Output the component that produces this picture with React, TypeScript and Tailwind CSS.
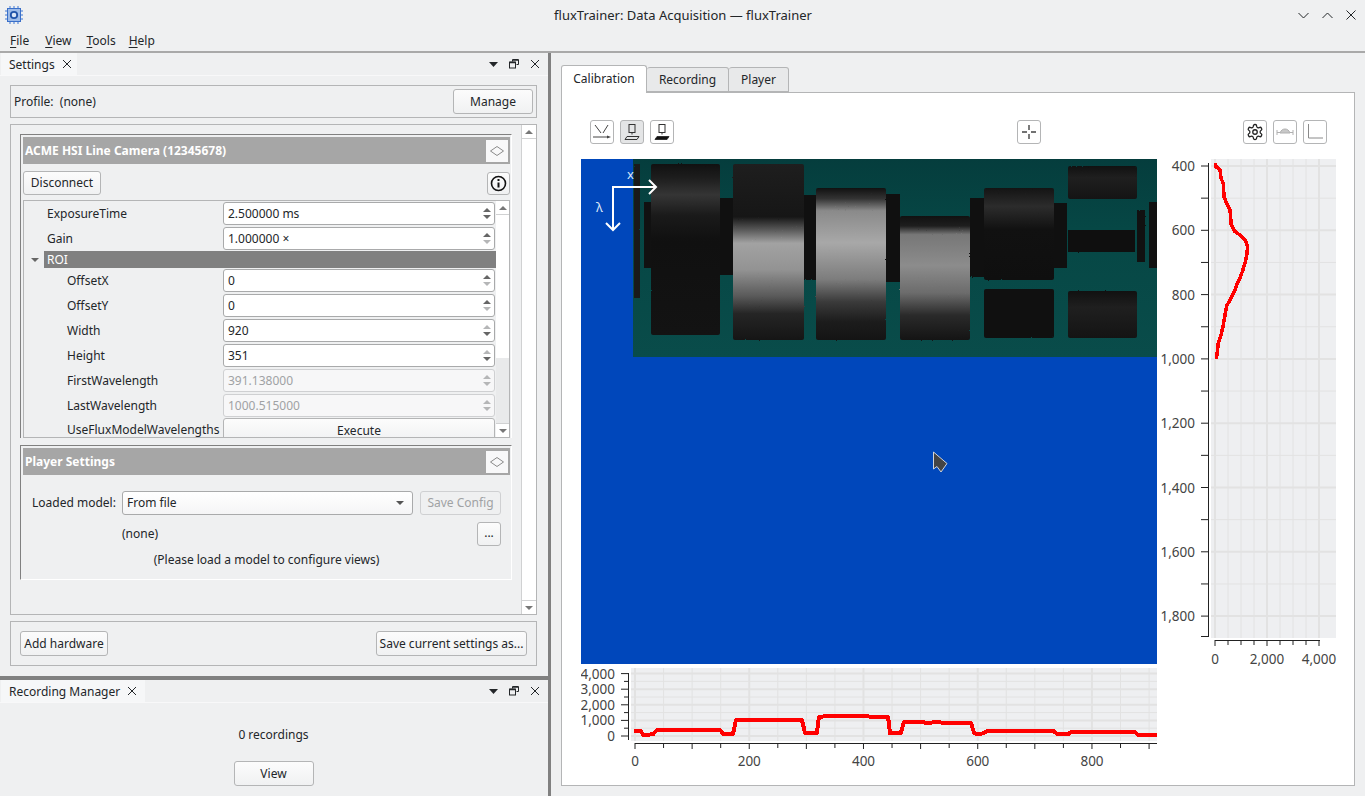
import { ReactNode } from "react";

const Tri = ({ dir = "up", color = "#666" }: { dir?: "up" | "down"; color?: string }) => (
  <svg width="8" height="4" viewBox="0 0 8 4" className="block">
    <polygon points={dir === "up" ? "4,0 8,4 0,4" : "0,0 8,0 4,4"} fill={color} />
  </svg>
);

const Btn = ({ children, className = "", disabled }: { children: ReactNode; className?: string; disabled?: boolean }) => (
  <div
    className={
      "flex items-center justify-center border rounded-[3px] whitespace-nowrap " +
      (disabled
        ? "border-[#cfd0d2] text-[#a0a2a4] bg-[#eff0f1] "
        : "border-[#b4b5b6] bg-gradient-to-b from-[#fcfcfc] to-[#f0f1f2] ") +
      className
    }
  >
    {children}
  </div>
);

const DockHeader = ({ title, tabW }: { title: string; tabW: string }) => (
  <div className="h-[23px] flex items-center border-b border-[#f8f8f9] shrink-0 pl-px">
    <div className={"h-[22px] bg-[#f6f7f8] flex items-center pl-2 gap-[7px] " + tabW}>
      <span className="pt-[2px]">{title}</span>
      <svg width="10" height="10" viewBox="0 0 10 10"><path d="M1 1l8 8M9 1l-8 8" stroke="#232629" strokeWidth="1" /></svg>
    </div>
    <div className="ml-auto flex items-center pr-[8px] gap-[11px]">
      <svg width="9" height="5" viewBox="0 0 9 5"><polygon points="0,0 9,0 4.5,5" fill="#232629" /></svg>
      <svg width="10" height="10" viewBox="0 0 10 10" fill="none" stroke="#232629">
        <path d="M3.5 2.5V.5h6v5h-2" />
        <rect x=".5" y="3" width="6" height="6" strokeWidth="1" />
        <path d="M1 3.5h5" strokeWidth="1.5" />
        <path d="M4 1h5" strokeWidth="1.5" />
      </svg>
      <svg width="10" height="10" viewBox="0 0 10 10"><path d="M1 1l8 8M9 1l-8 8" stroke="#232629" strokeWidth="1" /></svg>
    </div>
  </div>
);

const GroupHeader = ({ title }: { title: string }) => (
  <div className="h-[27px] bg-[#a6a6a6] flex items-center justify-between pl-[2px] pr-[2px]">
    <span className="font-bold text-white pt-px">{title}</span>
    <div className="w-[22px] h-[22px] bg-[#f8f8f9] flex items-center justify-center">
      <svg width="14" height="10" viewBox="0 0 14 10"><path d="M7 .5L13.5 5 7 9.5.5 5z" fill="none" stroke="#8a8a8a" /></svg>
    </div>
  </div>
);

const SpinRow = ({
  label,
  value,
  indent,
  up = "#666",
  down = "#666",
  disabled,
}: {
  label: string;
  value: string;
  indent: string;
  up?: string;
  down?: string;
  disabled?: boolean;
}) => (
  <div className="h-[25px] flex items-center shrink-0">
    <div className={"w-[199px] " + indent}>{label}</div>
    <div
      className={
        "w-[272px] h-[23px] border rounded-[3px] flex items-center " +
        (disabled ? "border-[#cfd0d2] bg-[#f7f7f8] text-[#a0a2a4]" : "border-[#a9aaab] bg-white")
      }
    >
      <span className="flex-1 pl-[4px]">{value}</span>
      <div className="w-[14px] flex flex-col items-center gap-[3px]">
        <Tri color={up} />
        <Tri dir="down" color={down} />
      </div>
    </div>
  </div>
);

const ScrollBtn = ({ dir }: { dir: "up" | "down" }) => (
  <div className={"h-[14px] flex items-center justify-center bg-white " + (dir === "up" ? "border-b" : "border-t") + " border-[#d0d1d2]"}>
    <Tri dir={dir} color="#777" />
  </div>
);

const ToolBtn = ({ children, pressed }: { children: ReactNode; pressed?: boolean }) => (
  <div className={"w-[24px] h-[24px] border border-[#b4b5b6] rounded-[3px] flex items-center justify-center " + (pressed ? "bg-[#e4e5e6]" : "bg-white")}>
    {children}
  </div>
);

const Camera = ({ plate }: { plate: "outline" | "solid" }) => (
  <svg width="18" height="18" viewBox="0 0 18 18" fill="none" stroke="#333">
    <rect x="6" y="1.5" width="6" height="8" />
    <path d="M9 9.5v2" />
    <polygon points="4,13.5 16,13.5 14,16.5 2,16.5" fill={plate === "solid" ? "#111" : "none"} />
  </svg>
);

// cylinders of the sample, positions read off the screenshot
const Cylinder = ({ x, y, w, h, fill }: { x: number; y: number; w: number; h: number; fill: string }) => (
  <rect x={x} y={y} width={w} height={h} rx="2" fill={fill} />
);

const CameraImage = () => (
  <svg width="576" height="505" viewBox="0 0 576 505" className="block shrink-0">
    <defs>
      <linearGradient id="teal" x1="0" y1="0" x2="0" y2="1">
        <stop offset="0" stopColor="#053d3d" />
        <stop offset="0.35" stopColor="#064745" />
        <stop offset="1" stopColor="#094c4a" />
      </linearGradient>
      <linearGradient id="dark1" x1="0" y1="0" x2="0" y2="1">
        <stop offset="0" stopColor="#111" />
        <stop offset="0.08" stopColor="#1d1d1d" />
        <stop offset="0.18" stopColor="#353535" />
        <stop offset="0.3" stopColor="#1a1a1a" />
        <stop offset="0.45" stopColor="#101010" />
        <stop offset="1" stopColor="#131313" />
      </linearGradient>
      <linearGradient id="bright2" x1="0" y1="0" x2="0" y2="1">
        <stop offset="0" stopColor="#1e1e1e" />
        <stop offset="0.3" stopColor="#161616" />
        <stop offset="0.37" stopColor="#555" />
        <stop offset="0.45" stopColor="#a2a2a2" />
        <stop offset="0.6" stopColor="#939393" />
        <stop offset="0.75" stopColor="#5a5a5a" />
        <stop offset="0.85" stopColor="#252525" />
        <stop offset="1" stopColor="#151515" />
      </linearGradient>
      <linearGradient id="bright3" x1="0" y1="0" x2="0" y2="1">
        <stop offset="0" stopColor="#111" />
        <stop offset="0.07" stopColor="#333" />
        <stop offset="0.15" stopColor="#8a8a8a" />
        <stop offset="0.36" stopColor="#a8a8a8" />
        <stop offset="0.6" stopColor="#7d7d7d" />
        <stop offset="0.75" stopColor="#3a3a3a" />
        <stop offset="0.88" stopColor="#1c1c1c" />
        <stop offset="1" stopColor="#141414" />
      </linearGradient>
      <linearGradient id="bright4" x1="0" y1="0" x2="0" y2="1">
        <stop offset="0" stopColor="#111" />
        <stop offset="0.08" stopColor="#1e1e1e" />
        <stop offset="0.15" stopColor="#777" />
        <stop offset="0.4" stopColor="#8c8c8c" />
        <stop offset="0.62" stopColor="#6c6c6c" />
        <stop offset="0.8" stopColor="#2a2a2a" />
        <stop offset="1" stopColor="#141414" />
      </linearGradient>
      <linearGradient id="dark5" x1="0" y1="0" x2="0" y2="1">
        <stop offset="0" stopColor="#141414" />
        <stop offset="0.2" stopColor="#2c2c2c" />
        <stop offset="0.45" stopColor="#111" />
        <stop offset="1" stopColor="#0f0f0f" />
      </linearGradient>
      <linearGradient id="dark6" x1="0" y1="0" x2="0" y2="1">
        <stop offset="0" stopColor="#111" />
        <stop offset="0.35" stopColor="#1f1f1f" />
        <stop offset="1" stopColor="#141414" />
      </linearGradient>
      <filter id="jag" x="-5%" y="-5%" width="110%" height="110%" colorInterpolationFilters="sRGB">
        <feTurbulence type="fractalNoise" baseFrequency="0.7" numOctaves="1" seed="4" result="noise" />
        <feDisplacementMap in="SourceGraphic" in2="noise" scale="2" xChannelSelector="R" yChannelSelector="G" />
      </filter>
    </defs>
    <rect width="576" height="505" fill="#0047bb" />
    <rect x="52" width="524" height="198" fill="url(#teal)" />
    <g filter="url(#jag)">
      <rect x="53" y="5" width="6" height="134" fill="#1a1a1a" />
      <rect x="63" y="43" width="8" height="66" fill="#111" />
      <Cylinder x={70} y={5} w={69} h={171} fill="url(#dark1)" />
      <rect x="139" y="39" width="14" height="77" fill="#101010" />
      <Cylinder x={152} y={5} w={71} h={176} fill="url(#bright2)" />
      <rect x="223" y="36" width="13" height="85" fill="#101010" />
      <Cylinder x={235} y={29} w={70} h={152} fill="url(#bright3)" />
      <rect x="305" y="35" width="14" height="88" fill="#101010" />
      <Cylinder x={319} y={57} w={70} h={124} fill="url(#bright4)" />
      <rect x="389" y="39" width="14" height="79" fill="#101010" />
      <Cylinder x={403} y={29} w={70} h={92} fill="url(#dark5)" />
      <Cylinder x={403} y={130} w={70} h={49} fill="#101010" />
      <rect x="473" y="44" width="13" height="65" fill="#101010" />
      <Cylinder x={487} y={7} w={69} h={33} fill="url(#dark6)" />
      <rect x="487" y="71" width="67" height="22" fill="#0f0f0f" />
      <Cylinder x={487} y={132} w={69} h={47} fill="url(#dark6)" />
      <rect x="556" y="51" width="8" height="52" fill="#111" />
      <rect x="568" y="43" width="8" height="66" fill="#111" />
    </g>
    <path d="M32 71V28h43M68 21l7 7-7 7M25 64l7 7 7-7" fill="none" stroke="#fff" strokeWidth="2" />
    <text x="46" y="20" fill="#dbe6f7" fontSize="13">x</text>
    <text x="15" y="53" fill="#dbe6f7" fontSize="13">λ</text>
    <polygon points="352.5,293 352.5,310 356,307.5 360,313 366,304.5" fill="#444" stroke="#d0d4dc" strokeWidth="1" />
  </svg>
);

const bottomCurve: [number, number][] = [
  [187, 228], [205, 228], [210, 240], [235, 238], [245, 225], [405, 225], [413, 236], [438, 236], [445, 195],
  [612, 195], [620, 235], [650, 235], [655, 186], [670, 184], [780, 184], [785, 186], [830, 186], [835, 235],
  [862, 235], [870, 202], [920, 202], [930, 205], [945, 202], [1040, 205], [1048, 235], [1060, 238], [1070, 235],
  [1080, 229], [1250, 229], [1258, 238], [1285, 238], [1292, 232], [1455, 232], [1462, 239], [1510, 239],
];

// svg origin is at (581, 664) of the page
const BottomPlot = () => {
  const line = bottomCurve.map(([x, y]) => `${(560 + x / 2.53 - 581).toFixed(1)},${(y / 3 - 9).toFixed(1)}`).join(" ");
  const xMinor = Array.from({ length: 19 }, (_, i) => 54 + i * 28.56);
  const yMinor = Array.from({ length: 9 }, (_, i) => 72 - i * 7.8);
  return (
    <svg width="576" height="111" viewBox="0 0 576 111" className="block">
      <rect x="50" y="4" width="526" height="73" fill="#eeeff1" />
      {xMinor.map((x, i) => (
        <line key={i} x1={x} x2={x} y1="4" y2="77" stroke="#e2e2e2" strokeWidth={i % 4 === 0 ? 2 : 1} />
      ))}
      {yMinor.map((y, i) => (
        <line key={i} x1="50" x2="576" y1={y} y2={y} stroke="#e2e2e2" strokeWidth={i % 2 === 0 ? 2 : 1} />
      ))}
      {yMinor.map((y, i) => (
        <line key={i} x1={i % 2 === 0 ? 40 : 43} x2="47" y1={y} y2={y} stroke="#222" />
      ))}
      <line x1="47.5" x2="47.5" y1="9" y2="76" stroke="#222" />
      <line x1="54" x2="576" y1="79.5" y2="79.5" stroke="#222" />
      {xMinor.map((x, i) => (
        <line key={i} x1={x} x2={x} y1="79" y2={i % 2 === 0 ? 85 : 84} stroke="#222" />
      ))}
      <g fill="#444" fontSize="13.5" fontFamily="Noto Sans, sans-serif">
        {["4,000", "3,000", "2,000", "1,000", "0"].map((t, i) => (
          <text key={t} x="34" y={14.5 + i * 15.6} textAnchor="end">{t}</text>
        ))}
        {["0", "200", "400", "600", "800"].map((t, i) => (
          <text key={t} x={54 + i * 114.25} y="102" textAnchor="middle">{t}</text>
        ))}
      </g>
      <polyline points={line} fill="none" stroke="#ff0000" strokeWidth="4" strokeLinejoin="round" shapeRendering="crispEdges" />
    </svg>
  );
};

const sideCurve: [number, number][] = [
  [181, 25], [183, 35], [195, 45], [198, 70], [205, 85], [207, 125], [215, 145], [225, 165], [229, 210], [238, 228],
  [255, 240], [272, 258], [278, 275], [275, 300], [270, 325], [262, 350], [255, 370], [245, 390], [238, 410],
  [228, 430], [215, 452], [210, 480], [205, 510], [198, 540], [190, 565], [187, 590], [184, 612],
];

// svg origin is at (1157, 159) of the page
const SidePlot = () => {
  const line = sideCurve.map(([x, y]) => `${(x / 3 - 2).toFixed(1)},${(y / 3 - 4).toFixed(1)}`).join(" ");
  const yTicks = Array.from({ length: 15 }, (_, i) => 7 + i * 32.15);
  const xTicks = Array.from({ length: 9 }, (_, i) => 58 + i * 13);
  return (
    <svg width="188" height="520" viewBox="0 0 188 520" className="block">
      <rect x="54" y="0" width="125" height="479" fill="#eeeff1" />
      {xTicks.map((x, i) => (
        <line key={i} x1={x} x2={x} y1="0" y2="479" stroke="#e2e2e2" strokeWidth={i % 4 === 0 ? 2 : 1} />
      ))}
      {yTicks.map((y, i) => (
        <line key={i} x1="54" x2="179" y1={y} y2={y} stroke="#e2e2e2" strokeWidth={i % 2 === 0 ? 2 : 1} />
      ))}
      <line x1="51.5" x2="51.5" y1="4" y2="478" stroke="#222" />
      {yTicks.map((y, i) => (
        <line key={i} x1="44" x2="51" y1={y} y2={y} stroke="#222" />
      ))}
      <line x1="44" x2="51" y1="477.5" y2="477.5" stroke="#222" />
      <line x1="58" x2="163" y1="481.5" y2="481.5" stroke="#222" />
      {xTicks.map((x, i) => (
        <line key={i} x1={x} x2={x} y1="481" y2={i % 4 === 0 ? 487 : 486} stroke="#222" />
      ))}
      <g fill="#444" fontSize="13.5" fontFamily="Noto Sans, sans-serif">
        {["400", "600", "800", "1,000", "1,200", "1,400", "1,600", "1,800"].map((t, i) => (
          <text key={t} x="38" y={12 + i * 64.3} textAnchor="end">{t}</text>
        ))}
        <text x="58" y="505" textAnchor="middle">0</text>
        <text x="110" y="505" textAnchor="middle">2,000</text>
        <text x="162" y="505" textAnchor="middle">4,000</text>
      </g>
      <polyline points={line} fill="none" stroke="#ff0000" strokeWidth="3.5" strokeLinejoin="round" shapeRendering="crispEdges" />
    </svg>
  );
};

export default function App() {
  return (
    <div className="w-[1365px] h-[796px] overflow-hidden bg-[#eff0f1] flex flex-col font-['Noto_Sans',sans-serif] text-[12px] leading-none text-[#232629]">
      {/* title bar */}
      <div className="h-[30px] shrink-0 flex items-center pl-[4px] pr-[9px]">
        <svg width="20" height="20" viewBox="0 0 20 20" fill="none">
          <path d="M6 1v18M10 1v18M14 1v18M1 6h18M1 10h18M1 14h18" stroke="#3f78d4" />
          <rect x="3.5" y="3.5" width="13" height="13" fill="#9dbbe8" stroke="#3a6fc9" />
          <circle cx="10" cy="10" r="3.2" fill="#dbe6f7" stroke="#1f52a8" strokeWidth="1.8" />
        </svg>
        <div className="flex-1 text-center text-[13px] pl-[44px]">fluxTrainer: Data Acquisition — fluxTrainer</div>
        <div className="flex items-center gap-[13px] text-[#232629]">
          <svg width="11" height="7" viewBox="0 0 11 7"><path d="M.5 1l5 5 5-5" fill="none" stroke="#232629" /></svg>
          <svg width="11" height="7" viewBox="0 0 11 7"><path d="M.5 6l5-5 5 5" fill="none" stroke="#232629" /></svg>
          <svg width="10" height="10" viewBox="0 0 10 10"><path d="M.5.5l9 9M9.5.5l-9 9" stroke="#232629" /></svg>
        </div>
      </div>
      {/* menu */}
      <div className="h-[23px] shrink-0 flex items-center pl-[10px] gap-[15px] border-b-2 border-[#a9a9a9]">
        <span className="mr-px"><u className="underline-offset-2">F</u>ile</span>
        <span><u className="underline-offset-2">V</u>iew</span>
        <span><u className="underline-offset-2">T</u>ools</span>
        <span className="-ml-[2px]"><u className="underline-offset-2">H</u>elp</span>
      </div>

      <div className="flex-1 min-h-0 flex">
        {/* left docks */}
        <div className="w-[548px] shrink-0 flex flex-col">
          <div className="h-[623px] shrink-0 flex flex-col">
            <DockHeader title="Settings" tabW="w-[76px]" />
            <div className="pl-[10px] pr-[11px] pt-[9px] flex flex-col">
              <div className="h-[33px] border border-[#b4b5b6] flex items-center justify-between pl-[3px] pr-[3px]">
                <span>Profile:&nbsp; (none)</span>
                <Btn className="w-[80px] h-[25px]">Manage</Btn>
              </div>
              <div className="mt-[6px] h-[491px] border border-[#b4b5b6] flex">
                <div className="flex-1 min-w-0 pl-[9px] pr-[9px] pt-[9px]">
                  <div className="border-l border-t border-[#808080] border-r-white border-r pl-[2px] pr-[1px] pt-[2px] h-[304px]">
                    <GroupHeader title="ACME HSI Line Camera (12345678)" />
                    <div className="flex justify-between items-center h-[24px] mt-[7px]">
                      <Btn className="w-[78px] h-[24px]">Disconnect</Btn>
                      <Btn className="w-[23px] h-[23px] !bg-white">
                        <svg width="17" height="17" viewBox="0 0 17 17" fill="none" stroke="#111">
                          <circle cx="8.5" cy="8.5" r="7" strokeWidth="1.6" />
                          <path d="M8.5 7.5v5" strokeWidth="2" />
                          <path d="M8.5 4v2" strokeWidth="2" />
                        </svg>
                      </Btn>
                    </div>
                    <div className="mt-[5px] h-[238px] border border-[#b4b5b6] flex overflow-hidden">
                      <div className="w-[472px] shrink-0 overflow-hidden">
                        <SpinRow label="ExposureTime" value="2.500000 ms" indent="pl-[23px]" />
                        <SpinRow label="Gain" value="1.000000 ×" indent="pl-[23px]" down="#b5b6b7" />
                        <div className="h-[17px] flex items-center">
                          <div className="w-[20px] flex justify-center pl-[1px]"><Tri dir="down" color="#666" /></div>
                          <div className="w-[452px] h-[17px] bg-[#808080] text-white flex items-center pl-[3px]">ROI</div>
                        </div>
                        <SpinRow label="OffsetX" value="0" indent="pl-[43px]" down="#b5b6b7" />
                        <SpinRow label="OffsetY" value="0" indent="pl-[43px]" down="#b5b6b7" />
                        <SpinRow label="Width" value="920" indent="pl-[43px]" up="#b5b6b7" />
                        <SpinRow label="Height" value="351" indent="pl-[43px]" up="#b5b6b7" />
                        <SpinRow label="FirstWavelength" value="391.138000" indent="pl-[43px]" up="#b5b6b7" down="#b5b6b7" disabled />
                        <SpinRow label="LastWavelength" value="1000.515000" indent="pl-[43px]" up="#b5b6b7" down="#b5b6b7" disabled />
                        <div className="h-[25px] flex items-start">
                          <div className="w-[199px] pl-[43px] pt-[6px] whitespace-nowrap">UseFluxModelWavelengths</div>
                          <Btn className="w-[272px] h-[25px] !items-start pt-[6px]">Execute</Btn>
                        </div>
                      </div>
                      <div className="w-[14px] shrink-0 flex flex-col bg-white">
                        <ScrollBtn dir="up" />
                        <div className="h-[143px]" />
                        <div className="flex-1 bg-[#e9eaeb]" />
                        <ScrollBtn dir="down" />
                      </div>
                    </div>
                  </div>
                  <div className="mt-[7px] border-l border-t border-[#808080] border-r border-r-white border-b border-b-white pl-[2px] pr-[1px] pt-[2px] h-[135px] flex flex-col">
                    <GroupHeader title="Player Settings" />
                    <div className="flex items-center h-[24px] mt-[16px] pl-[9px]">
                      <span className="w-[90px]">Loaded model:</span>
                      <div className="w-[291px] h-[24px] border border-[#a9aaab] rounded-[3px] bg-gradient-to-b from-white to-[#f5f5f6] flex items-center justify-between pl-[4px] pr-[8px]">
                        <span>From file</span>
                        <Tri dir="down" color="#555" />
                      </div>
                      <Btn disabled className="w-[81px] h-[24px] ml-[7px]">Save Config</Btn>
                    </div>
                    <div className="flex items-center justify-between h-[24px] mt-[7px] pl-[99px] pr-[9px]">
                      <span>(none)</span>
                      <Btn className="w-[24px] h-[24px] !items-end pb-[6px]">...</Btn>
                    </div>
                    <div className="text-center mt-[8px]">(Please load a model to configure views)</div>
                  </div>
                </div>
                <div className="w-[15px] shrink-0 border-l border-[#d0d1d2] flex flex-col bg-white justify-between">
                  <ScrollBtn dir="up" />
                  <ScrollBtn dir="down" />
                </div>
              </div>
              <div className="mt-[6px] h-[45px] border border-[#b4b5b6] flex items-center justify-between pl-[9px] pr-[9px]">
                <Btn className="w-[88px] h-[25px]">Add hardware</Btn>
                <Btn className="w-[151px] h-[25px]">Save current settings as...</Btn>
              </div>
            </div>
          </div>
          <div className="h-[4px] shrink-0 bg-[#808080]" />
          <div className="flex-1 min-h-0 flex flex-col">
            <DockHeader title="Recording Manager" tabW="w-[144px]" />
            <div className="flex flex-col items-center pr-[1px]">
              <div className="mt-[26px]">0 recordings</div>
              <Btn className="w-[80px] h-[25px] mt-[20px]">View</Btn>
            </div>
          </div>
        </div>
        <div className="w-[3px] shrink-0 bg-[#808080]" />

        {/* calibration side */}
        <div className="flex-1 min-w-0 pl-[10px] pr-[10px] pt-[12px] pb-[10px] flex flex-col">
          <div className="flex items-end h-[27px] shrink-0 relative z-10">
            <div className="w-[86px] h-[28px] bg-white border border-b-0 border-[#b4b5b6] rounded-t-[3px] flex items-center justify-center -mb-px pb-[2px]">Calibration</div>
            <div className="w-[82px] h-[25px] bg-[#e8e9ea] border border-l-0 border-[#b4b5b6] rounded-t-[3px] flex items-center justify-center">Recording</div>
            <div className="w-[60px] h-[25px] bg-[#e8e9ea] border border-l-0 border-[#b4b5b6] rounded-t-[3px] flex items-center justify-center">Player</div>
          </div>
          <div className="flex-1 min-h-0 bg-white border border-[#b4b5b6] pl-[19px] pt-[27px] flex flex-col">
            <div className="h-[24px] flex items-center pl-[9px] w-[746px] shrink-0">
              <div className="flex gap-[6px]">
                <ToolBtn>
                  <svg width="20" height="18" viewBox="0 0 20 18" fill="none" stroke="#444">
                    <path d="M3 2l6 8M16 2l-5 8M1 14h15" />
                    <path d="M15 12.5l4 1.5-4 1.5z" fill="#444" stroke="none" />
                  </svg>
                </ToolBtn>
                <ToolBtn pressed><Camera plate="outline" /></ToolBtn>
                <ToolBtn><Camera plate="solid" /></ToolBtn>
              </div>
              <div className="ml-[343px]">
                <ToolBtn>
                  <svg width="16" height="16" viewBox="0 0 16 16" fill="none" stroke="#444">
                    <path d="M8 1v5M8 10v5M1 8h5M10 8h5" strokeWidth="1.4" />
                  </svg>
                </ToolBtn>
              </div>
              <div className="ml-auto flex gap-[6px]">
                <ToolBtn>
                  <svg width="18" height="18" viewBox="0 0 24 24" fill="none" stroke="#222" strokeWidth="1.7">
                    <path d="M12.22 2h-.44a2 2 0 0 0-2 2v.18a2 2 0 0 1-1 1.73l-.43.25a2 2 0 0 1-2 0l-.15-.08a2 2 0 0 0-2.73.73l-.22.38a2 2 0 0 0 .73 2.73l.15.1a2 2 0 0 1 1 1.72v.51a2 2 0 0 1-1 1.74l-.15.09a2 2 0 0 0-.73 2.73l.22.38a2 2 0 0 0 2.73.73l.15-.08a2 2 0 0 1 2 0l.43.25a2 2 0 0 1 1 1.73V20a2 2 0 0 0 2 2h.44a2 2 0 0 0 2-2v-.18a2 2 0 0 1 1-1.73l.43-.25a2 2 0 0 1 2 0l.15.08a2 2 0 0 0 2.73-.73l.22-.39a2 2 0 0 0-.73-2.73l-.15-.08a2 2 0 0 1-1-1.74v-.5a2 2 0 0 1 1-1.74l.15-.09a2 2 0 0 0 .73-2.73l-.22-.38a2 2 0 0 0-2.73-.73l-.15.08a2 2 0 0 1-2 0l-.43-.25a2 2 0 0 1-1-1.73V4a2 2 0 0 0-2-2z" />
                    <circle cx="12" cy="12" r="3" />
                  </svg>
                </ToolBtn>
                <ToolBtn>
                  <svg width="18" height="12" viewBox="0 0 18 12" fill="none" stroke="#b0b0b0">
                    <path d="M1 4v5M17 4v5M1 6.5h3M14 6.5h3" />
                    <path d="M4 7c1-3 3-4 5-4s4 1 5 4z" fill="#c8c8c8" />
                  </svg>
                </ToolBtn>
                <ToolBtn>
                  <svg width="18" height="18" viewBox="0 0 18 18" fill="none" stroke="#8a8a8a"><path d="M2.5 1v14H17" /></svg>
                </ToolBtn>
              </div>
            </div>
            <div className="mt-[15px] flex">
              <div className="w-[576px] shrink-0 flex flex-col">
                <CameraImage />
                <BottomPlot />
              </div>
              <SidePlot />
            </div>
          </div>
        </div>
      </div>
    </div>
  );
}
